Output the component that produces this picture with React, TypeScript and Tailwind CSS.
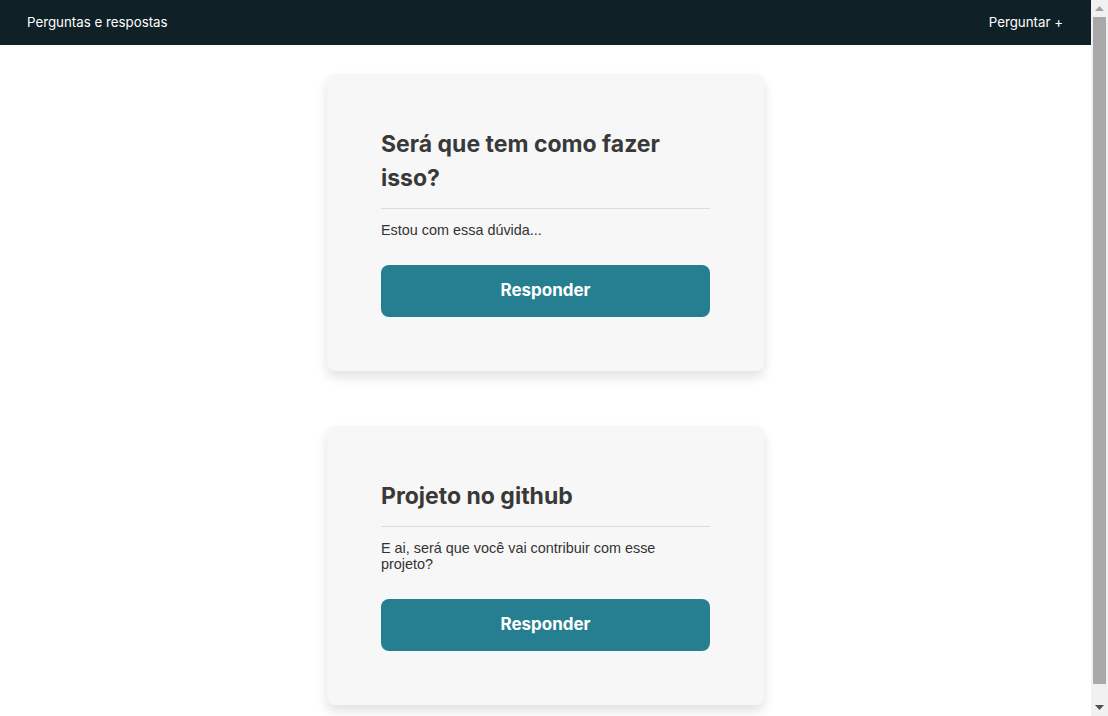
const questions = [
  { title: "Será que tem como fazer isso?", body: "Estou com essa dúvida..." },
  { title: "Projeto no github", body: "E ai, será que você vai contribuir com esse projeto?" },
];

function Navbar() {
  return (
    <nav className="flex h-[45px] shrink-0 items-center justify-between bg-[#0f2026] pl-[27px] pr-[28px] text-[13.3px] text-white [font-family:Inter,'Noto_Sans',sans-serif]">
      <span>Perguntas e respostas</span>
      <span>Perguntar +</span>
    </nav>
  );
}

function QuestionCard({ title, body }: { title: string; body: string }) {
  return (
    <div className="w-[437px] shrink-0 rounded-lg bg-[#f7f7f7] px-[54px] pt-[53px] pb-[54px] shadow-[0_6px_12px_rgba(0,0,0,0.12)]">
      <h2 className="text-[23px] leading-[34px] font-bold text-[#393939] [font-family:Inter,sans-serif]">
        {title}
      </h2>
      <hr className="mt-[13px] border-t border-[#dcdcdc]" />
      <p className="mt-[13px] max-w-[326px] text-[14.4px] leading-4 text-[#333] [font-family:'Liberation_Sans',Arial,sans-serif]">
        {body}
      </p>
      <button className="mt-[27px] h-[52px] w-full rounded-lg bg-[#267f91] text-[17px] font-bold text-white [font-family:Inter,sans-serif]">
        Responder
      </button>
    </div>
  );
}

// the page scrollbar, drawn since the window shows the classic one
function Scrollbar() {
  return (
    <div className="flex w-[17px] shrink-0 flex-col items-center bg-[#f1f1f1]">
      <div className="flex h-[17px] items-center justify-center">
        <svg width="9" height="5" viewBox="0 0 9 5">
          <path d="M0 5 L4.5 0 L9 5 Z" fill="#a3a3a3" />
        </svg>
      </div>
      <div className="h-[667px] w-[13px] bg-[#a8a8a8]" />
      <div className="mt-auto flex h-[17px] items-center justify-center">
        <svg width="9" height="5" viewBox="0 0 9 5">
          <path d="M0 0 L9 0 L4.5 5 Z" fill="#505050" />
        </svg>
      </div>
    </div>
  );
}

export default function App() {
  return (
    <div className="flex h-screen overflow-hidden bg-white">
      <div className="flex min-w-0 flex-1 flex-col overflow-hidden">
        <Navbar />
        <main className="flex flex-col items-center gap-[55px] pt-[29px] pb-[26px]">
          {questions.map((q) => (
            <QuestionCard key={q.title} title={q.title} body={q.body} />
          ))}
        </main>
      </div>
      <Scrollbar />
    </div>
  );
}
